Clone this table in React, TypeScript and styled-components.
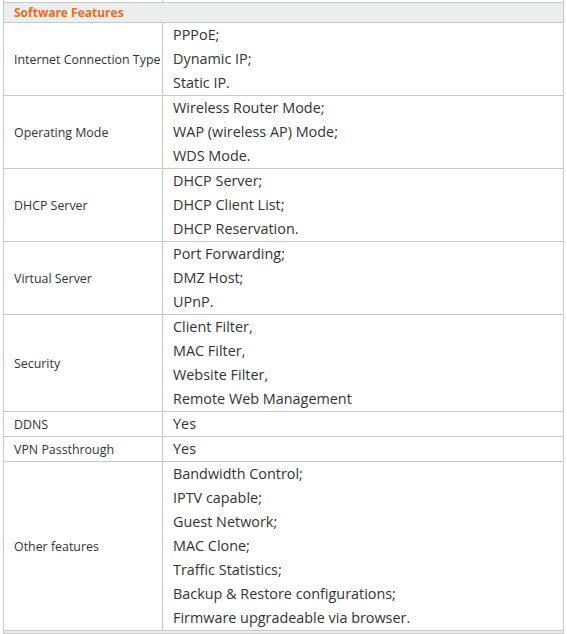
import React from "react";
import styled, { createGlobalStyle } from "styled-components";

const Global = createGlobalStyle`
  html, body { margin: 0; padding: 0; background: #fff; }
  body { overflow: hidden; }
`;

const Wrap = styled.div`
  padding-left: 3px;
  width: 561px;
`;

const Table = styled.table`
  border-collapse: collapse;
  width: 561px;
  table-layout: fixed;
  font-family: "Open Sans", "Noto Sans", sans-serif;
  color: #333;
`;

const Cell = styled.td<{ $label?: boolean }>`
  border: 1px solid #c9c9c9;
  padding: 0 0 0 10px;
  font-size: ${(p) => (p.$label ? "12.4px" : "14.4px")};
  vertical-align: middle;
  white-space: nowrap;
  overflow: hidden;
`;

const Stub = styled.td`
  border: 1px solid #c9c9c9;
  border-top: none;
  height: 2px;
  padding: 0;
`;

const HeaderCell = styled.td<{ $tall?: boolean }>`
  border: 1px solid #c9c9c9;
  background: #eceeed;
  height: ${(p) => (p.$tall ? "19px" : "2px")};
  padding: 0 0 0 10px;
  font-size: 12px;
  font-weight: 700;
  color: #ec6b23;
`;

const Line = styled.div`
  height: 24px;
  line-height: 24px;
`;

const rows: [string, string[]][] = [
  ["Internet Connection Type", ["PPPoE;", "Dynamic IP;", "Static IP."]],
  ["Operating Mode", ["Wireless Router Mode;", "WAP (wireless AP) Mode;", "WDS Mode."]],
  ["DHCP Server", ["DHCP Server;", "DHCP Client List;", "DHCP Reservation."]],
  ["Virtual Server", ["Port Forwarding;", "DMZ Host;", "UPnP."]],
  ["Security", ["Client Filter,", "MAC Filter,", "Website Filter,", "Remote Web Management"]],
  ["DDNS", ["Yes"]],
  ["VPN Passthrough", ["Yes"]],
  [
    "Other features",
    [
      "Bandwidth Control;",
      "IPTV capable;",
      "Guest Network;",
      "MAC Clone;",
      "Traffic Statistics;",
      "Backup & Restore configurations;",
      "Firmware upgradeable via browser.",
    ],
  ],
];

export default function App() {
  return (
    <Wrap>
      <Global />
      <Table>
        <colgroup>
          <col style={{ width: 159 }} />
          <col />
        </colgroup>
        <tbody>
          <tr>
            <Stub />
            <Stub />
          </tr>
          <tr>
            <HeaderCell $tall colSpan={2}>Software Features</HeaderCell>
          </tr>
          {rows.map(([label, lines]) => (
            <tr key={label}>
              <Cell $label>{label}</Cell>
              <Cell>
                {lines.map((l) => (
                  <Line key={l}>{l}</Line>
                ))}
              </Cell>
            </tr>
          ))}
          <tr>
            <HeaderCell colSpan={2} />
          </tr>
        </tbody>
      </Table>
    </Wrap>
  );
}
